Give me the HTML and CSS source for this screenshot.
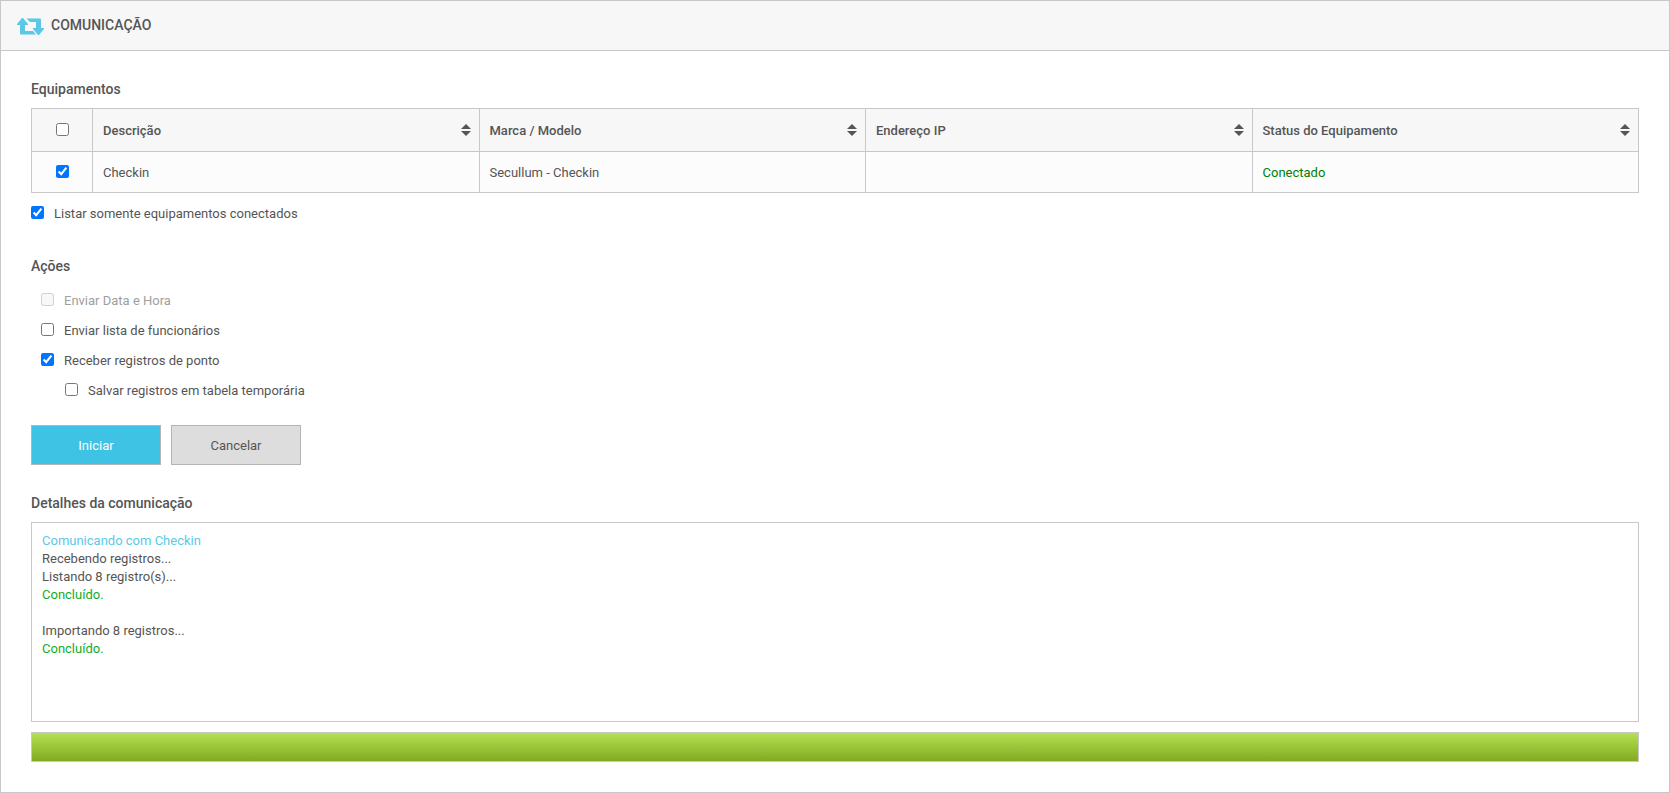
FILE: index.html
```
<!DOCTYPE html>
<html lang="pt-BR">
  <head>
    <meta charset="UTF-8" />
    <meta name="viewport" content="width=device-width, initial-scale=1.0" />
    <title>Comunicação</title>
    <link rel="stylesheet" href="styles.css" />
  </head>
  <body>
    <div class="janela">
      <header class="cabecalho">
        <svg class="icone" viewBox="0 0 27 17" aria-hidden="true">
          <path d="M5 0h1L11 6v1H8v6h8l3 3.500H4q-1 0-1-1V7H0V6z" />
          <path d="M22 17h-1L16 11v-1h3V4h-6L9.500.500H23q1 0 1 1V10h3v1z" />
        </svg>
        <h1>COMUNICAÇÃO</h1>
      </header>

      <main class="conteudo">
        <section>
          <h2>Equipamentos</h2>
          <table class="tabela">
            <thead>
              <tr>
                <th class="selecao"><input type="checkbox" aria-label="Selecionar todos" /></th>
                <th><div class="coluna">Descrição <span class="ordenar"></span></div></th>
                <th><div class="coluna">Marca / Modelo <span class="ordenar"></span></div></th>
                <th><div class="coluna">Endereço IP <span class="ordenar"></span></div></th>
                <th><div class="coluna">Status do Equipamento <span class="ordenar"></span></div></th>
              </tr>
            </thead>
            <tbody>
              <tr>
                <td class="selecao"><input type="checkbox" aria-label="Selecionar Checkin" checked /></td>
                <td>Checkin</td>
                <td>Secullum - Checkin</td>
                <td></td>
                <td class="conectado">Conectado</td>
              </tr>
            </tbody>
          </table>
          <label class="opcao filtro"><input type="checkbox" checked />Listar somente equipamentos conectados</label>
        </section>

        <section>
          <h2>Ações</h2>
          <div class="acoes">
            <label class="opcao desabilitada"><input type="checkbox" disabled />Enviar Data e Hora</label>
            <label class="opcao"><input type="checkbox" />Enviar lista de funcionários</label>
            <label class="opcao"><input type="checkbox" checked />Receber registros de ponto</label>
            <label class="opcao subopcao"><input type="checkbox" />Salvar registros em tabela temporária</label>
          </div>
          <div class="botoes">
            <button type="button" class="botao primario">Iniciar</button>
            <button type="button" class="botao">Cancelar</button>
          </div>
        </section>

        <section>
          <h2>Detalhes da comunicação</h2>
          <div class="log">
            <p class="info">Comunicando com Checkin</p>
            <p>Recebendo registros...</p>
            <p>Listando 8 registro(s)...</p>
            <p class="sucesso">Concluído.</p>
            <br />
            <p>Importando 8 registros...</p>
            <p class="sucesso">Concluído.</p>
          </div>
          <div class="progresso" role="progressbar" aria-label="Progresso" aria-valuenow="100" aria-valuemin="0" aria-valuemax="100">
            <div class="barra" style="width: 100%"></div>
          </div>
        </section>
      </main>
    </div>
  </body>
</html>
```

FILE: styles.css
```
* {
  box-sizing: border-box;
}
body {
  margin: 0;
  font-family: Roboto, "Liberation Sans", sans-serif;
  font-size: 13px;
  line-height: 18px;
  color: #555;
  background: #fff;
}
.janela {
  min-height: 100vh;
  border: 1px solid #c8c8c8;
}
.cabecalho {
  display: flex;
  align-items: center;
  gap: 7px;
  height: 50px;
  padding: 0 16px 1px;
  background: #f7f7f7;
  border-bottom: 1px solid #c8c8c8;
}
.icone {
  width: 27px;
  height: 17px;
  margin-top: 3px;
  fill: #5bc8e8;
}
h1,
h2 {
  margin: 0;
  font-size: 14px;
  line-height: 16px;
  font-weight: 500;
}
h2 {
  margin-bottom: 11px;
}
.conteudo {
  display: flex;
  flex-direction: column;
  gap: 30px;
  padding: 30px;
}
input[type="checkbox"] {
  width: 13px;
  height: 13px;
  margin: 0;
}

/* Tabela de equipamentos */
.tabela {
  width: 100%;
  table-layout: fixed;
  border-collapse: collapse;
}
.tabela th,
.tabela td {
  height: 41px;
  padding: 2px 10px 0;
  border: 1px solid #c8c8c8;
  text-align: left;
  background: #fcfcfc;
}
.tabela th {
  height: 43px;
  font-weight: 500;
  background: #f7f7f7;
}
.tabela .selecao {
  width: 61px;
  padding: 0 10px 1px;
}
.selecao input {
  display: block;
  margin: 0 auto;
}
.coluna {
  display: flex;
  align-items: center;
  justify-content: space-between;
  margin-right: -2px;
}
.ordenar {
  padding-bottom: 2px;
}
.ordenar::before,
.ordenar::after {
  content: "";
  display: block;
  border: 5px solid transparent;
}
.ordenar::before {
  border-top: 0;
  border-bottom-color: #555;
}
.ordenar::after {
  margin-top: 2px;
  border-bottom: 0;
  border-top-color: #555;
}
.tabela .conectado {
  color: #008000;
}

/* Opções */
.opcao {
  display: flex;
  align-items: center;
  gap: 10px;
  width: fit-content;
  height: 30px;
  padding-top: 2px;
}
.opcao input[type="checkbox"] {
  margin-bottom: 3px;
}
.filtro {
  margin-top: 5px;
}
.acoes {
  padding-left: 10px;
}
.desabilitada {
  color: #a0a0a0;
}
.subopcao {
  margin-left: 24px;
}
.botoes {
  display: flex;
  gap: 10px;
  margin-top: 20px;
}
.botao {
  width: 130px;
  height: 40px;
  padding: 2px 0 0;
  font: inherit;
  color: #555;
  background: #ddd;
  border: 1px solid #b4b4b4;
}
.primario {
  color: #fff;
  background: #3ec3e5;
}

/* Detalhes da comunicação */
.log {
  height: 200px;
  padding: 9px 10px;
  overflow: auto;
  border: 1px solid #c8c8c8;
}
.log p {
  margin: 0;
}
.info {
  color: #5bc8e8;
}
.sucesso {
  color: #12ad2b;
}
.progresso {
  height: 30px;
  margin-top: 10px;
  border: 1px solid #c8c8c8;
}
.barra {
  height: 100%;
  background: linear-gradient(#b4e051, #82ab22);
}
```
